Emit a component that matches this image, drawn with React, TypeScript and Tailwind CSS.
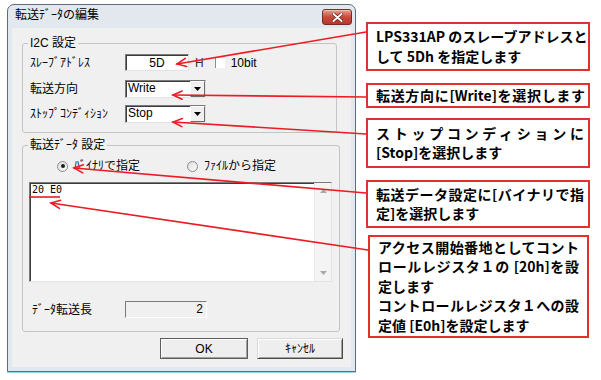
import React from 'react';

const RED = '#ec1c24';

type Arrow = { x1: number; y1: number; x2: number; y2: number };

// callout -> control pointers, in page coordinates
const ARROWS: Arrow[] = [
  { x1: 366, y1: 32, x2: 177, y2: 64 },
  { x1: 366, y1: 97, x2: 173, y2: 95 },
  { x1: 366, y1: 134, x2: 173, y2: 122 },
  { x1: 366, y1: 193, x2: 74, y2: 168 },
  { x1: 368, y1: 250, x2: 51, y2: 203 },
];

type Line = { t: string; j?: boolean };
type Note = { lines: Line[]; box: string };

const NOTES: Note[] = [
  {
    box: 'mt-[22px] h-[49px] w-[224px] pr-[2px]',
    lines: [{ t: 'LPS331AP のスレーブアドレスと', j: true }, { t: 'して 5Dh を指定します' }],
  },
  {
    box: 'mt-[12px] h-[25px] w-[224px] pr-[3px]',
    lines: [{ t: '転送方向に[Write]を選択します', j: true }],
  },
  {
    box: 'mt-[10px] h-[50px] w-[224px] pr-[4px]',
    lines: [{ t: 'ストップコンディションに', j: true }, { t: '[Stop]を選択します' }],
  },
  {
    box: 'mt-[12px] h-[48px] w-[224px] pr-[4px]',
    lines: [{ t: '転送データ設定に[バイナリで指', j: true }, { t: '定]を選択します' }],
  },
  {
    box: 'mt-[7px] ml-[2px] h-[103px] w-[221px] pr-[8px]',
    lines: [
      { t: 'アクセス開始番地としてコント', j: true },
      { t: 'ロールレジスタ１の [20h]を設', j: true },
      { t: '定します' },
      { t: 'コントロールレジスタ１への設', j: true },
      { t: '定値 [E0h]を設定します' },
    ],
  },
];

function headPath(a: Arrow) {
  const ang = Math.atan2(a.y1 - a.y2, a.x1 - a.x2);
  const len = 10;
  const spread = 0.42;
  const p1 = `${a.x2 + len * Math.cos(ang + spread)},${a.y2 + len * Math.sin(ang + spread)}`;
  const p2 = `${a.x2 + len * Math.cos(ang - spread)},${a.y2 + len * Math.sin(ang - spread)}`;
  return `M${p1} L${a.x2},${a.y2} L${p2}`;
}

const sunken =
  'bg-white border border-t-[#7a7a7a] border-l-[#7a7a7a] border-r-[#e3e3e3] border-b-[#e3e3e3] shadow-[inset_1px_1px_0_#3c3c3c]';

function DropDown({ value }: { value: string }) {
  return (
    <div className={`w-[81px] h-[18px] flex ${sunken}`}>
      <span className="flex-1 pl-[2px] text-[12px] leading-[15px]">{value}</span>
      <span className="w-[15px] h-full flex items-center justify-center bg-[#f0f0f0] border border-t-white border-l-white border-r-[#6b6b6b] border-b-[#6b6b6b]">
        <svg width="7" height="4" viewBox="0 0 7 4">
          <path d="M0 0 H7 L3.5 4 Z" fill="#000" />
        </svg>
      </span>
    </div>
  );
}

function Radio({ checked, label }: { checked?: boolean; label: string }) {
  return (
    <div className="flex items-center gap-[6px]">
      <span className="w-[11px] h-[11px] rounded-full border border-[#8a8a8a] bg-gradient-to-br from-[#dcdcdc] to-white flex items-center justify-center">
        {checked && <span className="w-[4px] h-[4px] rounded-full bg-[#1e1e1e]" />}
      </span>
      <span className="text-[12px] leading-[14px]">{label}</span>
    </div>
  );
}

function Dialog() {
  return (
    <div className="mt-[4px] ml-[7px] w-[349px] h-[368px] flex flex-col rounded-t-[7px] border border-[#5f6c7d] bg-[#e3e8ee] shadow-[0_1px_0_#9fd3ee] font-['Liberation_Sans','Noto_Sans_CJK_JP',sans-serif] text-black">
      {/* Title bar */}
      <div className="h-[23px] flex items-start pl-[7px] pr-[3px]">
        <span className="mt-[3px] text-[12px] leading-[14px]">転送ﾃﾞｰﾀの編集</span>
        <button className="ml-auto mt-[4px] w-[30px] h-[16px] rounded-[3px] border border-[#7a2a22] bg-gradient-to-b from-[#e3a093] via-[#c9493a] to-[#b7392b] flex items-center justify-center shadow-[inset_0_1px_0_#f1c0b6]">
          <svg width="11" height="9" viewBox="0 0 11 9">
            <path d="M1.5 1 L9.5 8 M9.5 1 L1.5 8" stroke="#5a1a12" strokeWidth="3.4" strokeLinecap="round" />
            <path d="M1.5 1 L9.5 8 M9.5 1 L1.5 8" stroke="#fff" strokeWidth="2" strokeLinecap="round" />
          </svg>
        </button>
      </div>

      {/* Client area */}
      <div className="mx-[4px] mb-[4px] flex-1 bg-[#f0f0f0] pt-[8px] flex flex-col">
        {/* I2C group */}
        <fieldset className="ml-[10px] w-[315px] border border-[#c4c4c4] rounded-[3px] px-[7px] pb-[9px]">
          <legend className="ml-[-2px] px-[2px] text-[12px] leading-[14px]">I2C 設定</legend>
          <div className="mt-[4px] h-[17px] flex items-center text-[12px]">
            <span className="w-[95px] leading-[14px]">ｽﾚｰﾌﾞｱﾄﾞﾚｽ</span>
            <div className={`w-[64px] h-[17px] flex items-center justify-center leading-[14px] ${sunken}`}>5D</div>
            <span className="ml-[6px] leading-[14px] text-[#333]">H</span>
            <span className="ml-[11px] w-[10px] h-[11px] bg-white border-l border-l-[#8c8c8c] border-t border-t-[#e0e0e0]" />
            <span className="ml-[6px] leading-[14px]">10bit</span>
          </div>
          <div className="mt-[9px] h-[18px] flex items-center text-[12px]">
            <span className="w-[95px] leading-[14px]">転送方向</span>
            <DropDown value="Write" />
          </div>
          <div className="mt-[7px] h-[18px] flex items-center text-[12px]">
            <span className="w-[95px] leading-[14px]">ｽﾄｯﾌﾟｺﾝﾃﾞｨｼｮﾝ</span>
            <DropDown value="Stop" />
          </div>
        </fieldset>

        {/* Transfer data group */}
        <fieldset className="mt-[5px] ml-[10px] w-[315px] border border-[#c4c4c4] rounded-[3px] px-[7px] pb-[13px]">
          <legend className="ml-[-2px] px-[2px] text-[12px] leading-[14px]">転送ﾃﾞｰﾀ 設定</legend>
          <div className="mt-[7px] h-[14px] flex items-center">
            <div className="ml-[27px] w-[130px]">
              <Radio checked label="ﾊﾞｲﾅﾘで指定" />
            </div>
            <Radio label="ﾌｧｲﾙから指定" />
          </div>
          <div className={`mt-[9px] ml-[-1px] w-[303px] h-[100px] flex ${sunken}`}>
            <div className="flex-1 pl-[2px] pt-[1px] font-['DejaVu_Sans_Mono',monospace] text-[10px] leading-[12px] whitespace-pre">
              20 E0
            </div>
            <div className="w-[17px] h-full bg-[#f4f4f4] border-l border-l-[#e8e8e8] flex flex-col items-center justify-between py-[6px]">
              <svg width="7" height="4" viewBox="0 0 7 4">
                <path d="M0 4 H7 L3.5 0 Z" fill="#a8a8a8" />
              </svg>
              <svg width="7" height="4" viewBox="0 0 7 4">
                <path d="M0 0 H7 L3.5 4 Z" fill="#a8a8a8" />
              </svg>
            </div>
          </div>
          <div className="mt-[19px] h-[17px] flex items-center text-[12px]">
            <span className="ml-[2px] w-[93px] leading-[14px]">ﾃﾞｰﾀ転送長</span>
            <div className="w-[82px] h-[17px] bg-[#f0f0f0] border border-t-[#7a7a7a] border-l-[#7a7a7a] border-r-white border-b-white text-right pr-[3px] leading-[15px]">
              2
            </div>
          </div>
        </fieldset>

        {/* Buttons */}
        <div className="mt-[6px] mr-[8px] flex justify-end gap-[9px] text-[12px]">
          <button className="w-[88px] h-[21px] bg-[#eeeeee] border border-[#5c5c5c] shadow-[inset_1px_1px_0_#fff,inset_-1px_-1px_0_#a0a0a0] leading-[14px]">
            OK
          </button>
          <button className="w-[86px] h-[21px] bg-[#eeeeee] border border-t-[#d8d8d8] border-l-[#d8d8d8] border-r-[#4a4a4a] border-b-[#4a4a4a] shadow-[inset_1px_1px_0_#fff,inset_-1px_-1px_0_#a0a0a0] leading-[14px]">
            ｷｬﾝｾﾙ
          </button>
        </div>
      </div>
    </div>
  );
}

function Notes() {
  return (
    <div className="ml-[10px] flex flex-col font-['Noto_Sans_CJK_JP',sans-serif] font-bold text-[14px] leading-[19.5px] text-black">
      {NOTES.map((n, i) => (
        <div key={i} className={`${n.box} border-2 border-[#e0312f] bg-white pl-[8px] flex flex-col justify-center`}>
          {n.lines.map((l, k) => (
            <div key={k} className={l.j ? 'whitespace-nowrap [text-align-last:justify]' : 'whitespace-nowrap'}>
              {l.t}
            </div>
          ))}
        </div>
      ))}
    </div>
  );
}

function Arrows() {
  return (
    <svg className="absolute inset-0 pointer-events-none" width="601" height="380" viewBox="0 0 601 380">
      {ARROWS.map((a, i) => (
        <g key={i} stroke={RED} strokeWidth="1.6" fill="none" strokeLinecap="round">
          <line x1={a.x1} y1={a.y1} x2={a.x2} y2={a.y2} />
          <path d={headPath(a)} />
        </g>
      ))}
      <line x1="29" y1="197" x2="60" y2="197" stroke={RED} strokeWidth="1.6" />
    </svg>
  );
}

export default function App() {
  return (
    <div className="relative w-[601px] h-[380px] bg-white flex items-start overflow-hidden">
      <Dialog />
      <Notes />
      <Arrows />
    </div>
  );
}
